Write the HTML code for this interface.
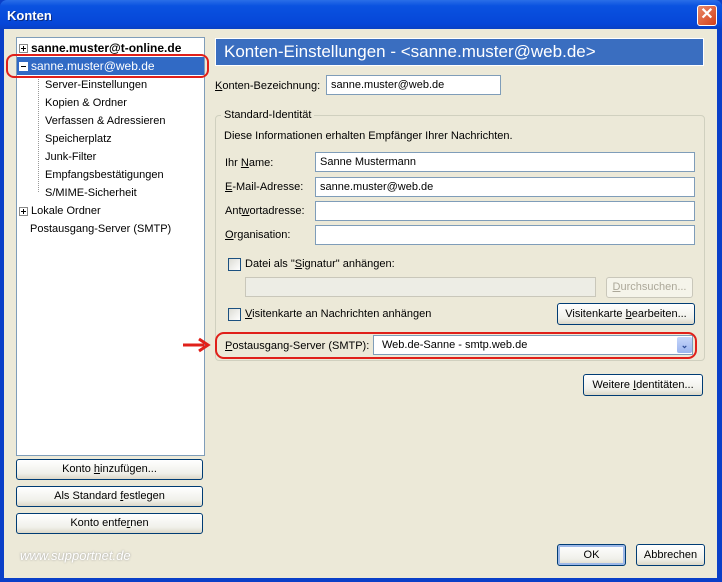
<!DOCTYPE html>
<html><head><meta charset="utf-8"><style>
*{margin:0;padding:0;box-sizing:border-box}
body{width:722px;height:582px;overflow:hidden;background:#0A3FC8;font-family:"Liberation Sans",sans-serif;font-size:11px;color:#000;position:relative}
.a{position:absolute}
.win{left:4px;top:29px;width:713px;height:549px;background:#ECE9D8}
.title{left:0;top:0;width:722px;height:30px;background:linear-gradient(#2a6ee8,#0a52e0 20%,#0646d8 80%,#0a3fc0);border-radius:7px 7px 0 0}
.tt{left:7px;top:8px;color:#fff;font-weight:bold;font-size:13px;text-shadow:1px 1px #0a2a80}
.close{left:697px;top:5px;width:20px;height:21px;background:linear-gradient(135deg,#e88a6a,#d5401a);border:1px solid #fff;border-radius:3px;color:#fff;font-weight:bold;font-size:16px;text-align:center;line-height:18px}
.tree{left:16px;top:37px;width:189px;height:419px;background:#fff;border:1px solid #7F9DB9}
.ti{position:absolute;white-space:nowrap}
.btn{position:absolute;background:linear-gradient(#fff,#f0f0ea 70%,#dcd8c8);border:1px solid #003C74;border-radius:3px;text-align:center;line-height:19px}
.inp{position:absolute;background:#fff;border:1px solid #7F9DB9;padding-left:4px;line-height:19px}
.cb{position:absolute;width:13px;height:13px;border:1px solid #1C5180;background:linear-gradient(135deg,#dcdcd4,#fff)}
.pm{display:inline-block;width:9px;height:9px;border:1px solid #888;background:#fff;position:relative;vertical-align:middle;margin-right:3px}
.pm:before{content:"";position:absolute;left:1px;top:3px;width:5px;height:1px;background:#000}
.pm.p:after{content:"";position:absolute;left:3px;top:1px;width:1px;height:5px;background:#000}
u{text-decoration:underline}
</style></head><body>
<div class="a title"></div>
<div class="a tt">Konten</div>
<div class="a close">✕</div>
<div class="a win"></div>

<div class="a tree">
 <div class="ti" style="left:2px;top:3px;font-weight:bold;font-size:12px"><span class="pm p"></span>sanne.muster@t-online.de</div>
 <div class="ti" style="left:0;top:19px;width:187px;height:18px;background:#316AC5;color:#fff;padding-left:2px;line-height:18px;font-size:12px"><span class="pm" style="border-color:#fff"></span>sanne.muster@web.de</div>
 <div class="ti" style="left:21px;top:38px;width:1px;height:116px;border-left:1px dotted #999"></div>
 <div class="ti" style="left:28px;top:41px">Server-Einstellungen</div>
 <div class="ti" style="left:28px;top:59px">Kopien &amp; Ordner</div>
 <div class="ti" style="left:28px;top:77px">Verfassen &amp; Adressieren</div>
 <div class="ti" style="left:28px;top:95px">Speicherplatz</div>
 <div class="ti" style="left:28px;top:113px">Junk-Filter</div>
 <div class="ti" style="left:28px;top:131px">Empfangsbestätigungen</div>
 <div class="ti" style="left:28px;top:149px">S/MIME-Sicherheit</div>
 <div class="ti" style="left:2px;top:167px"><span class="pm p"></span>Lokale Ordner</div>
 <div class="ti" style="left:13px;top:185px">Postausgang-Server (SMTP)</div>
</div>
<div class="a" style="left:6px;top:54px;width:203px;height:24px;border:2px solid #e0201a;border-radius:8px"></div>

<div class="btn" style="left:16px;top:459px;width:187px;height:21px">Konto <u>h</u>inzufügen...</div>
<div class="btn" style="left:16px;top:486px;width:187px;height:21px">Als Standard <u>f</u>estlegen</div>
<div class="btn" style="left:16px;top:513px;width:187px;height:21px">Konto entfe<u>r</u>nen</div>
<div class="a" style="left:20px;top:548px;color:#fff;font-style:italic;font-size:13px;text-shadow:0 0 2px #999">www.supportnet.de</div>

<div class="a" style="left:215px;top:38px;width:489px;height:28px;background:#3A6EC0;border:1px solid #fff;color:#fff;font-size:17px;padding-left:8px;line-height:26px">Konten-Einstellungen - &lt;sanne.muster@web.de&gt;</div>
<div class="a" style="left:215px;top:80px"><u>K</u>onten-Bezeichnung:</div>
<div class="inp" style="left:326px;top:75px;width:175px;height:20px">sanne.muster@web.de</div>

<div class="a" style="left:215px;top:115px;width:490px;height:246px;border:1px solid #D0D0BF;border-radius:4px"></div>
<div class="a" style="left:221px;top:109px;background:#ECE9D8;padding:0 3px">Standard-Identität</div>
<div class="a" style="left:224px;top:130px">Diese Informationen erhalten Empfänger Ihrer Nachrichten.</div>
<div class="a" style="left:225px;top:157px">Ihr <u>N</u>ame:</div>
<div class="inp" style="left:315px;top:152px;width:380px;height:20px">Sanne Mustermann</div>
<div class="a" style="left:225px;top:181px"><u>E</u>-Mail-Adresse:</div>
<div class="inp" style="left:315px;top:177px;width:380px;height:20px">sanne.muster@web.de</div>
<div class="a" style="left:225px;top:205px">Ant<u>w</u>ortadresse:</div>
<div class="inp" style="left:315px;top:201px;width:380px;height:20px"></div>
<div class="a" style="left:225px;top:229px"><u>O</u>rganisation:</div>
<div class="inp" style="left:315px;top:225px;width:380px;height:20px"></div>
<div class="cb" style="left:228px;top:258px"></div>
<div class="a" style="left:245px;top:258px">Datei als "<u>S</u>ignatur" anhängen:</div>
<div class="inp" style="left:245px;top:277px;width:351px;height:20px;background:#EDEDE5;border-color:#C9C7BA"></div>
<div class="btn" style="left:606px;top:277px;width:87px;height:21px;color:#ACA899;border-color:#C9C7BA;background:#F5F4EA"><u>D</u>urchsuchen...</div>
<div class="cb" style="left:228px;top:308px"></div>
<div class="a" style="left:245px;top:308px"><u>V</u>isitenkarte an Nachrichten anhängen</div>
<div class="btn" style="left:557px;top:303px;width:138px;height:22px;line-height:20px">Visitenkarte <u>b</u>earbeiten...</div>

<div class="a" style="left:225px;top:340px"><u>P</u>ostausgang-Server (SMTP):</div>
<div class="inp" style="left:373px;top:335px;width:320px;height:20px;padding-left:8px">Web.de-Sanne - smtp.web.de</div>
<div class="a" style="left:677px;top:337px;width:15px;height:16px;background:linear-gradient(#c6d6fa,#9bb5ef);border-radius:2px;color:#2c4a94;text-align:center;font-size:9px;line-height:16px;font-weight:bold">⌄</div>
<div class="a" style="left:215px;top:332px;width:482px;height:27px;border:2px solid #e0201a;border-radius:9px"></div>
<svg class="a" style="left:182px;top:337px" width="30" height="16"><path d="M1 8H22" stroke="#e0201a" stroke-width="3"/><path d="M17 2L26 8L17 14" stroke="#e0201a" stroke-width="3" fill="none"/></svg>

<div class="btn" style="left:583px;top:374px;width:120px;height:22px;line-height:20px">Weitere <u>I</u>dentitäten...</div>
<div class="btn" style="left:557px;top:544px;width:69px;height:22px;line-height:20px;border-color:#003C74;box-shadow:inset 0 0 0 2px #9DB8E8">OK</div>
<div class="btn" style="left:636px;top:544px;width:69px;height:22px;line-height:20px">Abbrechen</div>
</body></html>
